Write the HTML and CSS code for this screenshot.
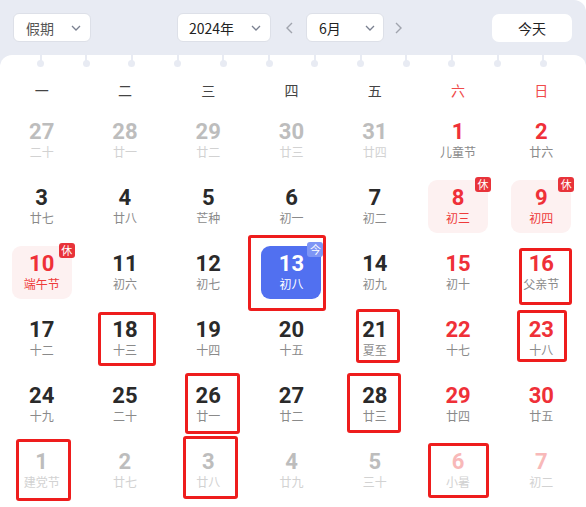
FILE: index.html
```html
<!DOCTYPE html>
<html lang="zh">
<head>
<meta charset="utf-8">
<link rel="stylesheet" href="styles.css">
</head>
<body>
<div class="app">
  <div class="toolbar">
    <div class="select sel-holiday"><span class="sel-text muted">假期</span><svg class="chev" viewBox="0 0 10 6"><path d="M1 1 L5 5 L9 1"/></svg></div>
    <div class="nav">
      <div class="select sel-year"><span class="sel-text">2024年</span><svg class="chev" viewBox="0 0 10 6"><path d="M1 1 L5 5 L9 1"/></svg></div>
      <svg class="arrow" viewBox="0 0 7 12"><path d="M6 1 L1 6 L6 11"/></svg>
      <div class="select sel-month"><span class="sel-text">6月</span><svg class="chev" viewBox="0 0 10 6"><path d="M1 1 L5 5 L9 1"/></svg></div>
      <svg class="arrow arrow-r" viewBox="0 0 7 12"><path d="M1 1 L6 6 L1 11"/></svg>
    </div>
    <div class="today-btn">今天</div>
  </div>
  <div class="card">
    <div class="holes">
      <i class="hole"></i><i class="hole"></i><i class="hole"></i><i class="hole"></i><i class="hole"></i><i class="hole"></i>
      <i class="hole"></i><i class="hole"></i><i class="hole"></i><i class="hole"></i><i class="hole"></i><i class="hole"></i>
    </div>
    <div class="weekdays">
      <span>一</span><span>二</span><span>三</span><span>四</span><span>五</span><span class="we">六</span><span class="we">日</span>
    </div>
    <div class="grid">
      <div class="cell other"><b>27</b><small>二十</small></div>
      <div class="cell other"><b>28</b><small>廿一</small></div>
      <div class="cell other"><b>29</b><small>廿二</small></div>
      <div class="cell other"><b>30</b><small>廿三</small></div>
      <div class="cell other"><b>31</b><small>廿四</small></div>
      <div class="cell red"><b>1</b><small>儿童节</small></div>
      <div class="cell red"><b>2</b><small>廿六</small></div>

      <div class="cell"><b>3</b><small>廿七</small></div>
      <div class="cell"><b>4</b><small>廿八</small></div>
      <div class="cell"><b>5</b><small>芒种</small></div>
      <div class="cell"><b>6</b><small>初一</small></div>
      <div class="cell"><b>7</b><small>初二</small></div>
      <div class="cell red holiday"><b>8</b><small>初三</small><em class="badge">休</em></div>
      <div class="cell red holiday"><b>9</b><small>初四</small><em class="badge">休</em></div>

      <div class="cell red holiday"><b>10</b><small>端午节</small><em class="badge">休</em></div>
      <div class="cell"><b>11</b><small>初六</small></div>
      <div class="cell"><b>12</b><small>初七</small></div>
      <div class="cell today"><b>13</b><small>初八</small><em class="badge badge-today">今</em></div>
      <div class="cell"><b>14</b><small>初九</small></div>
      <div class="cell red"><b>15</b><small>初十</small></div>
      <div class="cell red"><b>16</b><small>父亲节</small></div>

      <div class="cell"><b>17</b><small>十二</small></div>
      <div class="cell"><b>18</b><small>十三</small></div>
      <div class="cell"><b>19</b><small>十四</small></div>
      <div class="cell"><b>20</b><small>十五</small></div>
      <div class="cell"><b>21</b><small>夏至</small></div>
      <div class="cell red"><b>22</b><small>十七</small></div>
      <div class="cell red"><b>23</b><small>十八</small></div>

      <div class="cell"><b>24</b><small>十九</small></div>
      <div class="cell"><b>25</b><small>二十</small></div>
      <div class="cell"><b>26</b><small>廿一</small></div>
      <div class="cell"><b>27</b><small>廿二</small></div>
      <div class="cell"><b>28</b><small>廿三</small></div>
      <div class="cell red"><b>29</b><small>廿四</small></div>
      <div class="cell red"><b>30</b><small>廿五</small></div>

      <div class="cell other"><b>1</b><small>建党节</small></div>
      <div class="cell other"><b>2</b><small>廿七</small></div>
      <div class="cell other"><b>3</b><small>廿八</small></div>
      <div class="cell other"><b>4</b><small>廿九</small></div>
      <div class="cell other"><b>5</b><small>三十</small></div>
      <div class="cell other other-red"><b>6</b><small>小暑</small></div>
      <div class="cell other other-red"><b>7</b><small>初二</small></div>
    </div>
  </div>

  <div class="mark m1"></div>
  <div class="mark m2"></div>
  <div class="mark m3"></div>
  <div class="mark m4"></div>
  <div class="mark m5"></div>
  <div class="mark m6"></div>
  <div class="mark m7"></div>
  <div class="mark m8"></div>
  <div class="mark m9"></div>
  <div class="mark m10"></div>
</div>
</body>
</html>
```

FILE: styles.css
```css
* { box-sizing: border-box; }
html, body { margin: 0; padding: 0; background: #ffffff; }
body { font-family: "Noto Sans CJK SC", "Noto Sans", sans-serif; }

.app {
  position: relative;
  width: 586px;
  height: 507px;
  background: #e8ebf3;
  border-top-right-radius: 12px;
  display: flex;
  flex-direction: column;
  overflow: hidden;
}

.toolbar {
  display: flex;
  align-items: center;
  padding: 13px 14px 13px 13px;
  height: 55px;
}

.select {
  height: 29px;
  background: #fff;
  border: 1px solid #dde0e8;
  border-radius: 6px;
  display: flex;
  align-items: center;
  justify-content: space-between;
  font-size: 14px;
  color: #222;
}
.sel-text { line-height: 1; }
.muted { color: #555; }
.sel-holiday { width: 78px; padding: 0 9px 0 12px; }
.sel-year { width: 94px; padding: 0 9px 0 11px; }
.sel-month { width: 78px; padding: 0 8px 0 12px; }

.chev { width: 10px; height: 6px; fill: none; stroke: #7a8090; stroke-width: 1.3; }

.nav {
  display: flex;
  align-items: center;
  margin-left: 86px;
}
.arrow { width: 7px; height: 12px; fill: none; stroke: #a0a4ad; stroke-width: 1.4; margin: 0 13px 0 15px; }
.arrow-r { margin: 0 0 0 11px; }

.today-btn {
  margin-left: auto;
  width: 80px;
  height: 28px;
  background: #fff;
  border-radius: 7px;
  display: flex;
  align-items: center;
  justify-content: center;
  font-size: 14px;
  color: #222;
}

.card {
  flex: 1;
  background: #fff;
  border-radius: 12px 12px 0 0;
}

.holes {
  height: 16px;
  display: flex;
  justify-content: space-between;
  padding: 0 39px 0 37px;
}
.hole {
  position: relative;
  width: 7px;
  height: 12px;
}
.hole::before {
  content: "";
  position: absolute;
  left: 2.5px;
  top: 0;
  width: 2px;
  height: 6px;
  background: #e8ebf3;
}
.hole::after {
  content: "";
  position: absolute;
  left: 0;
  top: 4.5px;
  width: 7px;
  height: 7px;
  border-radius: 50%;
  background: #e8ebf3;
}

.weekdays {
  display: grid;
  grid-template-columns: repeat(7, 1fr);
  padding-right: 3px;
  height: 38px;
  align-items: center;
  font-size: 14px;
  color: #444;
  text-align: center;
}
.weekdays .we { color: #f04a4a; }

.grid {
  display: grid;
  grid-template-columns: repeat(7, 1fr);
  grid-auto-rows: 53px;
  row-gap: 13px;
  padding: 5px 3px 0 0;
}

.cell {
  position: relative;
  justify-self: center;
  width: 60px;
  height: 53px;
  border-radius: 9px;
  display: flex;
  flex-direction: column;
  align-items: center;
  padding-top: 7px;
}
.cell b {
  font-family: Roboto, "Liberation Sans", sans-serif;
  font-weight: 700;
  font-size: 22px;
  line-height: 22px;
  color: #2a2a2a;
}
.cell small {
  font-size: 12px;
  line-height: 17px;
  color: #8a8a8a;
}

.cell.red b { color: #ef3038; }
.holiday { background: #fdf1f1; }
.holiday small { color: #ee3a3a; }

.cell.other b { color: #bdbdbd; }
.cell.other small { color: #d2d2d2; }
.cell.other-red b { color: #f8b9b9; }

.today { background: #5170f0; }
.cell.today b, .cell.today small { color: #fff; }

.badge {
  position: absolute;
  top: -3px;
  right: -3px;
  width: 16px;
  height: 15px;
  border-radius: 3px;
  background: #e8333a;
  color: #fff;
  font-style: normal;
  font-size: 11px;
  line-height: 15px;
  text-align: center;
}
.badge-today {
  top: -4px;
  right: -2px;
  background: #7e95f5;
}

.mark {
  position: absolute;
  border: 3px solid #ee1d1d;
  border-radius: 3px;
}
.m1 { left: 248px; top: 235px; width: 78px; height: 76px; }
.m2 { left: 519px; top: 248px; width: 53px; height: 57px; }
.m3 { left: 98px; top: 312px; width: 58px; height: 54px; }
.m4 { left: 356px; top: 309px; width: 44px; height: 54px; }
.m5 { left: 517px; top: 310px; width: 50px; height: 52px; }
.m6 { left: 185px; top: 373px; width: 55px; height: 61px; }
.m7 { left: 347px; top: 373px; width: 54px; height: 60px; }
.m8 { left: 16px; top: 439px; width: 55px; height: 62px; }
.m9 { left: 183px; top: 436px; width: 55px; height: 63px; }
.m10 { left: 428px; top: 443px; width: 61px; height: 55px; }
```
